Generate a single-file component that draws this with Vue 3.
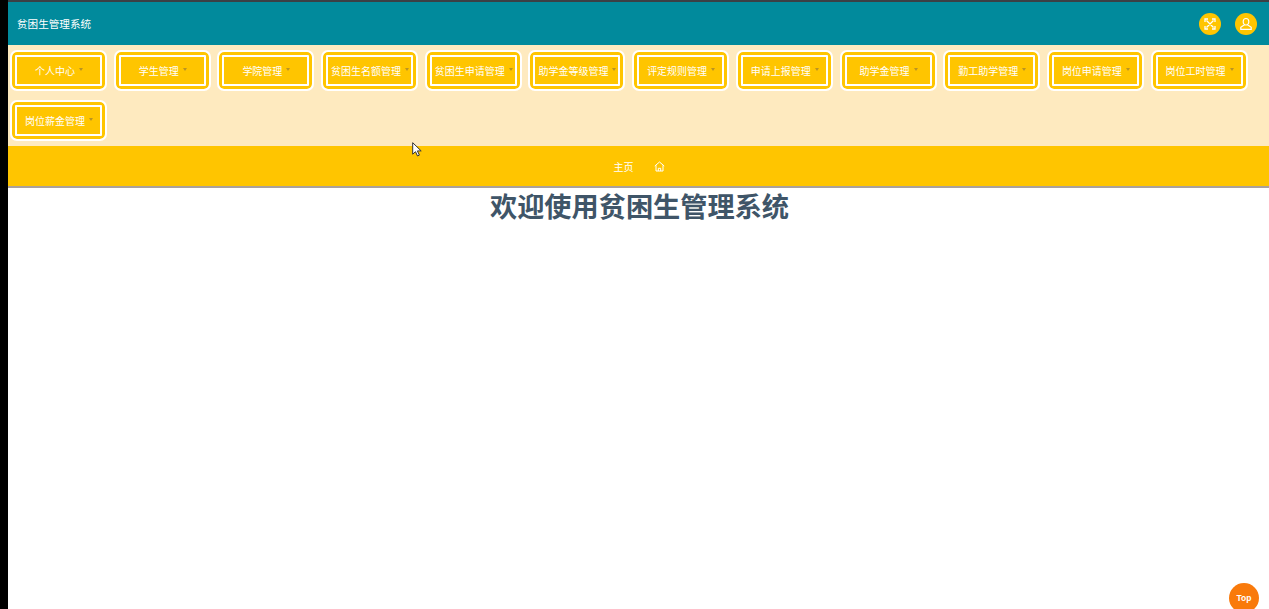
<script setup>
const menus = ['个人中心','学生管理','学院管理','贫困生名额管理','贫困生申请管理','助学金等级管理','评定规则管理','申请上报管理','助学金管理','勤工助学管理','岗位申请管理','岗位工时管理','岗位薪金管理']
</script>

<template>
  <div class="page">
    <aside class="edge"></aside>
    <main class="content">
      <header class="header">
        <span class="brand">贫困生管理系统</span>
        <div class="actions">
          <span class="circle">
            <svg width="14" height="14" viewBox="0 0 14 14" fill="none" stroke="#fff" stroke-width="1.300">
              <path d="M3.500 3.500l7 7M10.500 3.500l-7 7M2 5V2h3M9 2h3v3M12 9v3H9M5 12H2V9" />
            </svg>
          </span>
          <span class="circle">
            <svg width="14" height="14" viewBox="0 0 14 14" fill="none" stroke="#fff" stroke-width="1.200">
              <path d="M7 1.500c-1.800 0-2.800 1.300-2.800 3S5.200 8 7 8s2.800-1.800 2.800-3.500S8.800 1.500 7 1.500zM5.500 7.800 1.800 10.300v2h10.400v-2L8.500 7.800" />
            </svg>
          </span>
        </div>
      </header>
      <nav class="menu">
        <div v-for="m in menus" :key="m" class="slot">
          <div class="item">
            <span>{{ m }}</span><i class="caret"></i>
          </div>
        </div>
      </nav>
      <div class="crumb">
        <span>主页</span>
        <svg width="11" height="11" viewBox="0 0 11 11" fill="none" stroke="#fff" stroke-width="1">
          <path d="M.8 5 5.500 1l4.700 4M2 4.300V10h7V4.300M4.300 10V7.300h2.400V10" />
        </svg>
      </div>
      <h1 class="welcome">欢迎使用贫困生管理系统</h1>
    </main>
    <svg class="cursor" width="11" height="15" viewBox="0 0 11 15">
      <path d="M.7.7v11.500l2.800-2.500 2 4.300 1.900-.9-2-4.200h3.800z" fill="#fff" stroke="#333" stroke-width="1" />
    </svg>
    <div class="top">Top</div>
  </div>
</template>

<style>
html, body { margin: 0; background: #fff; overflow: hidden; }
</style>

<style scoped>
.page {
  position: relative;
  display: flex;
  height: 609px;
  width: 1269px;
  overflow: hidden;
  font-family: "Noto Sans CJK SC", "Liberation Sans", sans-serif;
}
.edge { width: 8px; flex: none; background: #000; }
.content { flex: 1; min-width: 0; background: #fff; }
.header {
  box-sizing: border-box;
  height: 45px;
  border-top: 2px solid #3b4045;
  background: #018a9c;
  display: flex;
  align-items: center;
  justify-content: space-between;
  padding: 0 12px 0 9px;
}
.brand { color: #fff; font-size: 10.600px; }
.actions { display: flex; gap: 14px; }
.circle {
  width: 22px;
  height: 22px;
  border-radius: 50%;
  background: #ffc500;
  display: flex;
  align-items: center;
  justify-content: center;
}
.menu {
  box-sizing: border-box;
  height: 101px;
  background: #feeabf;
  display: flex;
  flex-wrap: wrap;
  align-content: flex-start;
  padding: 5px 0 0 2px;
  row-gap: 9px;
}
.slot { width: 103.700px; height: 41px; flex: none; }
.item {
  box-sizing: border-box;
  width: 97px;
  height: 41px;
  padding-left: 1px;
  border: 2px solid #fff;
  border-radius: 7px;
  background: #ffc500;
  background-clip: padding-box;
  position: relative;
  color: #fff;
  font-size: 10px;
  display: flex;
  align-items: center;
  justify-content: center;
}
.item::before {
  content: "";
  position: absolute;
  inset: 3px;
  border: 2px solid #fff;
  border-radius: 1px;
  pointer-events: none;
}
.caret {
  width: 0;
  height: 0;
  margin-left: 4px;
  margin-bottom: 2px;
  border-left: 2.500px solid transparent;
  border-right: 2.500px solid transparent;
  border-top: 3px solid #bb9420;
}
.crumb {
  box-sizing: border-box;
  height: 42px;
  background: #ffc500;
  border-bottom: 2px solid #aaa19c;
  display: flex;
  align-items: center;
  justify-content: center;
  gap: 20px;
  color: #fff;
  font-size: 10px;
  padding-left: 1px;
}
.welcome {
  margin: 0;
  padding-left: 2px;
  text-align: center;
  color: #3f5568;
  font-size: 27.200px;
  line-height: 34px;
  font-weight: 700;
}
.cursor { position: absolute; left: 412px; top: 142px; }
.top {
  position: absolute;
  left: 1229px;
  top: 583px;
  width: 30px;
  height: 30px;
  border-radius: 50%;
  background: #f97a0b;
  color: #fff;
  font-size: 8.500px;
  font-family: "Liberation Sans", sans-serif;
  font-weight: 700;
  display: flex;
  align-items: center;
  justify-content: center;
}
</style>
